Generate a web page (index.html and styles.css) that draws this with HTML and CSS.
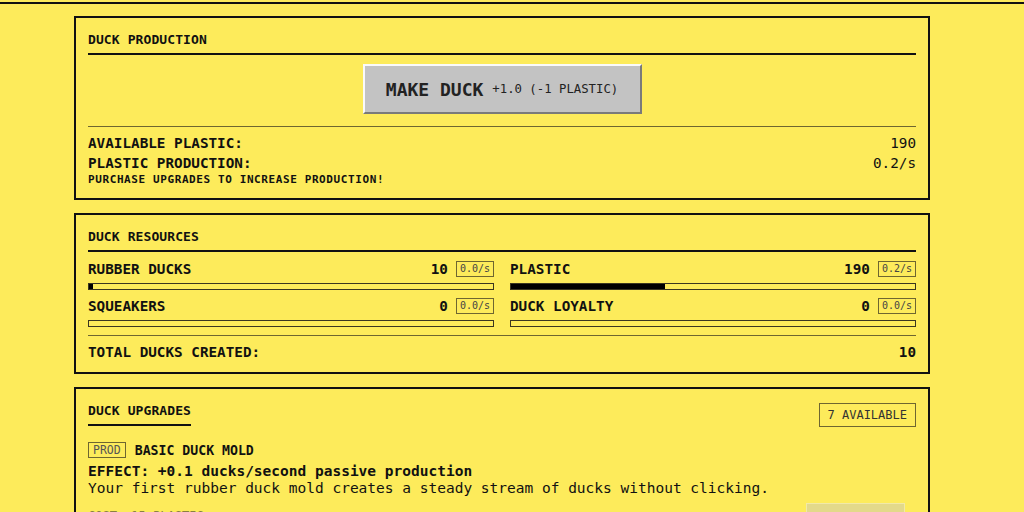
FILE: index.html
```html
<!DOCTYPE html>
<html>
<head>
<meta charset="utf-8">
<link rel="stylesheet" href="styles.css">
</head>
<body>
<div class="topbar"></div>
<main class="container">
  <section class="card">
    <h2 class="card-title">DUCK PRODUCTION</h2>
    <div class="make-wrap">
      <button class="make-btn"><span class="make-main">MAKE DUCK</span><span class="make-sub">+1.0 (-1 PLASTIC)</span></button>
    </div>
    <div class="stats">
      <div class="stat-row"><span class="strong">AVAILABLE PLASTIC:</span><span>190</span></div>
      <div class="stat-row"><span class="strong">PLASTIC PRODUCTION:</span><span>0.2/s</span></div>
      <div class="hint">PURCHASE UPGRADES TO INCREASE PRODUCTION!</div>
    </div>
  </section>

  <section class="card">
    <h2 class="card-title">DUCK RESOURCES</h2>
    <div class="res-grid">
      <div class="res">
        <div class="res-head"><span class="strong">RUBBER DUCKS</span><span class="res-val">10</span><span class="rate">0.0/s</span></div>
        <div class="bar"><div class="fill" style="width:1%"></div></div>
      </div>
      <div class="res">
        <div class="res-head"><span class="strong">PLASTIC</span><span class="res-val">190</span><span class="rate">0.2/s</span></div>
        <div class="bar"><div class="fill" style="width:38%"></div></div>
      </div>
      <div class="res">
        <div class="res-head"><span class="strong">SQUEAKERS</span><span class="res-val">0</span><span class="rate">0.0/s</span></div>
        <div class="bar"><div class="fill" style="width:0%"></div></div>
      </div>
      <div class="res">
        <div class="res-head"><span class="strong">DUCK LOYALTY</span><span class="res-val">0</span><span class="rate">0.0/s</span></div>
        <div class="bar"><div class="fill" style="width:0%"></div></div>
      </div>
    </div>
    <div class="total-row"><span class="strong">TOTAL DUCKS CREATED:</span><span class="strong">10</span></div>
  </section>

  <section class="card">
    <div class="upg-head">
      <h2 class="card-title short">DUCK UPGRADES</h2>
      <span class="avail">7 AVAILABLE</span>
    </div>
    <div class="upgrade">
      <div class="upg-name"><span class="tag">PROD</span><span class="name">BASIC DUCK MOLD</span></div>
      <div class="effect">EFFECT: +0.1 ducks/second passive production</div>
      <div class="desc">Your first rubber duck mold creates a steady stream of ducks without clicking.</div>
      <div class="upg-foot"><span class="cost">COST: 15 PLASTIC</span><button class="buy">BUY</button></div>
    </div>
  </section>
</main>
</body>
</html>
```

FILE: styles.css
```css
* { box-sizing: border-box; }
html, body { margin: 0; padding: 0; }
body {
  background: #fdeb5b;
  color: #111;
  font-family: "DejaVu Sans Mono", "Liberation Mono", monospace;
  font-size: 14.3px;
  overflow: hidden;
  height: 512px;
}
.topbar {
  height: 4px;
  border-bottom: 2px solid #111;
}
.container {
  width: 856px;
  margin-left: 74px;
  padding-top: 12px;
  display: flex;
  flex-direction: column;
  gap: 13px;
}
.card {
  border: 2px solid #111;
  padding: 14px 12px 12px;
}
.card-title {
  margin: 0;
  font-size: 13px;
  line-height: 16px;
  font-weight: bold;
  letter-spacing: 0.1px;
  padding-bottom: 5px;
  border-bottom: 2px solid #111;
}
.card-title.short { display: inline-block; }
.make-wrap {
  display: flex;
  justify-content: center;
  padding: 9px 0 12px;
  border-bottom: 1px solid #6e6630;
}
.make-btn {
  width: 279px;
  height: 50px;
  background: #c3c3c3;
  border: 2px solid;
  border-color: #fafafa #7a7a7a #7a7a7a #fafafa;
  font-family: inherit;
  color: #222;
  display: flex;
  align-items: center;
  justify-content: center;
  gap: 9px;
  padding: 0;
}
.make-main { font-size: 18px; font-weight: bold; }
.make-sub { font-size: 12.3px; }
.stats { padding-top: 6px; }
.stat-row {
  display: flex;
  justify-content: space-between;
  line-height: 20px;
}
.strong { font-weight: bold; }
.hint {
  font-size: 11px;
  letter-spacing: 0.6px;
  font-weight: bold;
  line-height: 13px;
}
.res-grid {
  display: grid;
  grid-template-columns: 1fr 1fr;
  column-gap: 16px;
  row-gap: 8px;
  padding-top: 9px;
}
.res-head {
  display: flex;
  align-items: center;
  height: 16px;
}
.res-head .strong:first-child { flex: 1; }
.res-val { font-weight: bold; margin-right: 8px; }
.rate {
  border: 1px solid #6e6630;
  font-size: 10px;
  line-height: 14px;
  height: 16px;
  padding: 0 3px;
  color: #444;
}
.bar {
  margin-top: 6px;
  height: 7px;
  border: 1px solid #3a3620;
  background: #fdeb5b;
}
.fill {
  height: 100%;
  background: #000;
}
.total-row {
  margin-top: 8px;
  border-top: 1px solid #6e6630;
  padding-top: 8px;
  line-height: 16px;
  display: flex;
  justify-content: space-between;
}
.upg-head {
  display: flex;
  justify-content: space-between;
  align-items: flex-start;
}
.avail {
  border: 1px solid #6e6630;
  height: 24px;
  line-height: 22px;
  padding: 0 8px;
  font-size: 12px;
  color: #333;
}
.upgrade { padding-top: 15px; }
.upg-name {
  display: flex;
  align-items: center;
  gap: 9px;
  height: 16px;
}
.tag {
  border: 1px solid #6e6630;
  font-size: 11.5px;
  line-height: 14px;
  padding: 0 4px;
  color: #555;
}
.name { font-weight: bold; font-size: 13.2px; }
.effect {
  font-weight: bold;
  margin-top: 5px;
  line-height: 17px;
  font-size: 14.5px;
}
.desc {
  line-height: 17px;
  font-size: 14.5px;
}
.upg-foot {
  display: flex;
  justify-content: space-between;
  align-items: flex-start;
  margin-top: 6px;
}
.cost { color: #8a8040; font-size: 12px; padding-top: 6px; }
.buy {
  width: 99px;
  height: 30px;
  margin-right: 11px;
  background: #e3d98a;
  border: 1px solid #f1e9a8;
  font-family: inherit;
  color: #8a8040;
}
```
